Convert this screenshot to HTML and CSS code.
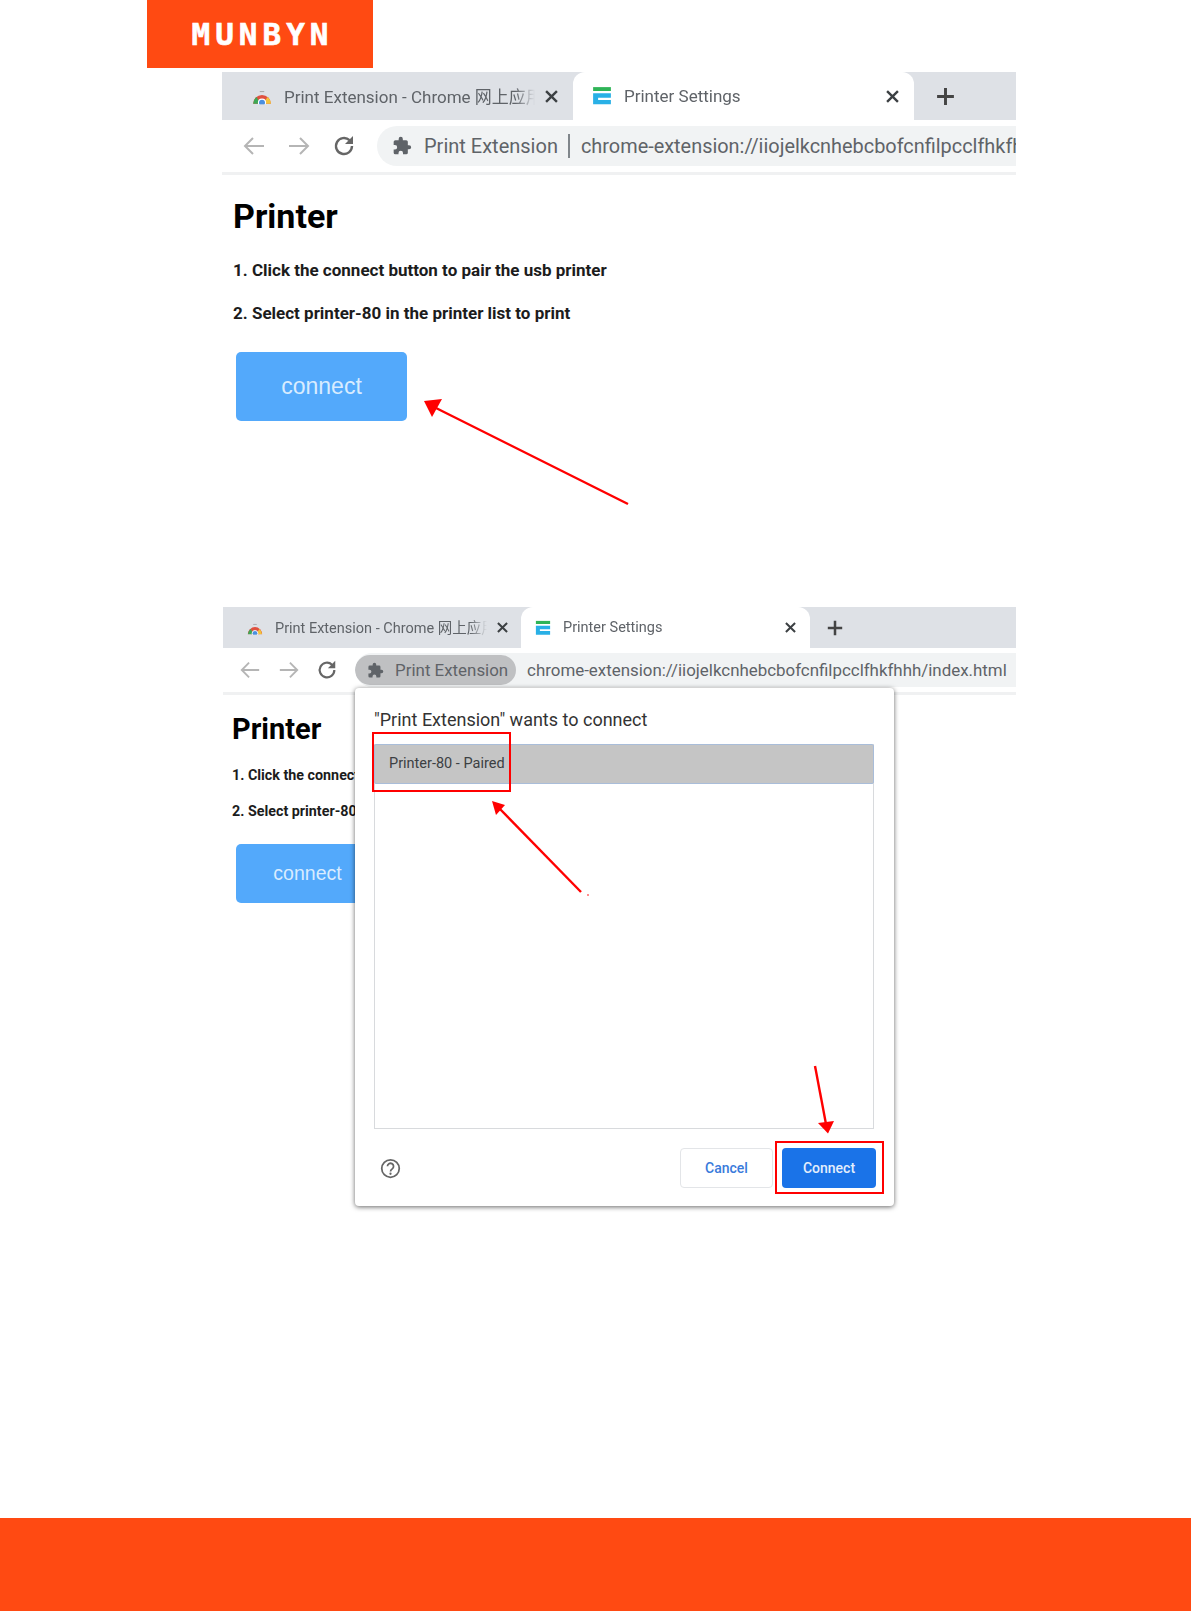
FILE: index.html
```html
<!DOCTYPE html>
<html lang="en">
<head>
  <meta charset="UTF-8" />
  <title>MUNBYN Print Extension</title>
  <link rel="stylesheet" href="styles.css">
</head>
<body>
  <header class="logo-bar"><span class="logo">MUNBYN</span></header>

  <!-- First screenshot -->
  <section class="shot shot-one">
    <div class="tabstrip">
      <div class="tab">
        <svg class="favicon" viewBox="0 0 18 18"><path d="M7 5h4" stroke="#aaa"/><path d="M1 16a8 8 0 0 1 16 0z" fill="#e0503f"/><path d="M1 16a8 8 0 0 1 3-6l4 6z" fill="#3da857"/><path d="M17 16a8 8 0 0 0-3-6l-4 6z" fill="#f3c33c"/><circle cx="9" cy="15" r="3.200" fill="#4a8fe0" stroke="#fff"/><rect y="16.500" width="18" height="2" fill="#dee1e6"/></svg>
        <span class="tab-title">Print Extension - Chrome 网上应用</span>
        <svg class="tab-close" viewBox="0 0 12 12"><path d="M1 1l10 10M11 1L1 11" stroke="#3c4043" stroke-width="2.200"/></svg>
      </div>
      <div class="tab tab-active">
        <svg class="favicon" viewBox="0 0 18 18"><rect x="1" y="1" width="16" height="3.500" fill="#2fb457"/><path d="M1 6.500h16v4H5.500v2H17v4H1z" fill="#29b0e6"/></svg>
        <span class="tab-title">Printer Settings</span>
        <svg class="tab-close" viewBox="0 0 12 12"><path d="M1 1l10 10M11 1L1 11" stroke="#3c4043" stroke-width="2.200"/></svg>
      </div>
      <svg class="new-tab" viewBox="0 0 20 20"><path d="M10 2v16M2 10h16" stroke="#444" stroke-width="2.800"/></svg>
    </div>
    <div class="toolbar">
      <svg class="nav" viewBox="0 0 24 24"><path d="M22 12H3M11 4l-8 8 8 8" fill="none" stroke="#b5b5b5" stroke-width="2"/></svg>
      <svg class="nav" viewBox="0 0 24 24"><path d="M2 12h19M13 4l8 8-8 8" fill="none" stroke="#b5b5b5" stroke-width="2"/></svg>
      <svg class="nav" viewBox="0 0 24 24"><path d="M20 12a8 8 0 1 1-2.500-5.800" fill="none" stroke="#666" stroke-width="2.400"/><path d="M21 2v8h-8z" fill="#666"/></svg>
      <div class="omnibox">
        <svg class="puzzle" viewBox="0 0 24 24"><path d="M20.500 11H19V7a2 2 0 0 0-2-2h-4V3.500a2.500 2.500 0 0 0-5 0V5H4a2 2 0 0 0-2 2v3.800h1.500a2.700 2.700 0 0 1 0 5.400H2V20a2 2 0 0 0 2 2h3.800v-1.500a2.700 2.700 0 0 1 5.400 0V22H17a2 2 0 0 0 2-2v-4h1.500a2.500 2.500 0 0 0 0-5z" fill="#5f6368"/></svg>
        <span class="ext-name">Print Extension</span>
        <span class="sep"></span>
        <span class="url">chrome-extension://iiojelkcnhebcbofcnfilpcclfhkfhhh/index.html</span>
      </div>
    </div>
    <main class="page">
      <h1>Printer</h1>
      <p>1. Click the connect button to pair the usb printer</p>
      <p>2. Select printer-80 in the printer list to print</p>
      <button class="connect">connect</button>
    </main>
    <svg class="annot" viewBox="0 0 794 520"><path d="M406 432L212 335" stroke="#f00" stroke-width="2.400"/><path d="M202 329l18-2-10 18z" fill="#f00"/></svg>
  </section>

  <!-- Second screenshot -->
  <section class="shot shot-two">
    <div class="tabstrip">
      <div class="tab">
        <svg class="favicon" viewBox="0 0 18 18"><path d="M7 5h4" stroke="#aaa"/><path d="M1 16a8 8 0 0 1 16 0z" fill="#e0503f"/><path d="M1 16a8 8 0 0 1 3-6l4 6z" fill="#3da857"/><path d="M17 16a8 8 0 0 0-3-6l-4 6z" fill="#f3c33c"/><circle cx="9" cy="15" r="3.200" fill="#4a8fe0" stroke="#fff"/><rect y="16.500" width="18" height="2" fill="#dee1e6"/></svg>
        <span class="tab-title">Print Extension - Chrome 网上应用</span>
        <svg class="tab-close" viewBox="0 0 12 12"><path d="M1 1l10 10M11 1L1 11" stroke="#3c4043" stroke-width="2.200"/></svg>
      </div>
      <div class="tab tab-active">
        <svg class="favicon" viewBox="0 0 18 18"><rect x="1" y="1" width="16" height="3.500" fill="#2fb457"/><path d="M1 6.500h16v4H5.500v2H17v4H1z" fill="#29b0e6"/></svg>
        <span class="tab-title">Printer Settings</span>
        <svg class="tab-close" viewBox="0 0 12 12"><path d="M1 1l10 10M11 1L1 11" stroke="#3c4043" stroke-width="2.200"/></svg>
      </div>
      <svg class="new-tab" viewBox="0 0 20 20"><path d="M10 2v16M2 10h16" stroke="#444" stroke-width="2.800"/></svg>
    </div>
    <div class="toolbar">
      <svg class="nav" viewBox="0 0 24 24"><path d="M22 12H3M11 4l-8 8 8 8" fill="none" stroke="#b5b5b5" stroke-width="2"/></svg>
      <svg class="nav" viewBox="0 0 24 24"><path d="M2 12h19M13 4l8 8-8 8" fill="none" stroke="#b5b5b5" stroke-width="2"/></svg>
      <svg class="nav" viewBox="0 0 24 24"><path d="M20 12a8 8 0 1 1-2.500-5.800" fill="none" stroke="#666" stroke-width="2.400"/><path d="M21 2v8h-8z" fill="#666"/></svg>
      <div class="omnibox">
        <div class="chip">
          <svg class="puzzle" viewBox="0 0 24 24"><path d="M20.500 11H19V7a2 2 0 0 0-2-2h-4V3.500a2.500 2.500 0 0 0-5 0V5H4a2 2 0 0 0-2 2v3.800h1.500a2.700 2.700 0 0 1 0 5.400H2V20a2 2 0 0 0 2 2h3.800v-1.500a2.700 2.700 0 0 1 5.400 0V22H17a2 2 0 0 0 2-2v-4h1.500a2.500 2.500 0 0 0 0-5z" fill="#5f6368"/></svg>
          <span class="ext-name">Print Extension</span>
        </div>
        <span class="url">chrome-extension://iiojelkcnhebcbofcnfilpcclfhkfhhh/index.html</span>
      </div>
    </div>
    <main class="page">
      <h1>Printer</h1>
      <p>1. Click the connect button to pair the usb printer</p>
      <p>2. Select printer-80 in the printer list to print</p>
      <button class="connect">connect</button>
    </main>

    <div class="dialog">
      <h2>"Print Extension" wants to connect</h2>
      <div class="device-list">
        <div class="device">Printer-80 - Paired</div>
      </div>
      <div class="dialog-foot">
        <svg class="help" viewBox="0 0 24 24"><circle cx="12" cy="12" r="10" fill="none" stroke="#666" stroke-width="2"/><path d="M8.500 9.500a3.500 3.500 0 1 1 5.500 2.900c-1.300.9-2 1.400-2 2.900" fill="none" stroke="#666" stroke-width="2"/><circle cx="12" cy="18" r="1.300" fill="#666"/></svg>
        <button class="btn-cancel">Cancel</button>
        <button class="btn-connect">Connect</button>
      </div>
    </div>

    <div class="mark mark-device"></div>
    <div class="mark mark-connect"></div>
    <svg class="annot" viewBox="0 0 793 640"><path d="M358 285L276 201" stroke="#f00" stroke-width="2.400"/><path d="M269 194l13 4-9 10z" fill="#f00"/><circle cx="365" cy="288" r="0.800" fill="#f00"/><path d="M592 459l11 58" stroke="#f00" stroke-width="2.400"/><path d="M605 526.500l-10-10.500 16-2z" fill="#f00"/></svg>
  </section>

  <footer class="footer-bar"></footer>
</body>
</html>
```

FILE: styles.css
```css
* {
  box-sizing: border-box;
  margin: 0;
  padding: 0;
}

html, body {
  height: 1611px;
  overflow: hidden;
}

body {
  background: #fff;
  font-family: Roboto, "Noto Sans CJK SC", sans-serif;
  display: flex;
  flex-direction: column;
}

.logo-bar {
  width: 226px;
  height: 68px;
  margin-left: 147px;
  background: #ff4a12;
  display: flex;
  align-items: center;
  justify-content: center;
}

.logo {
  color: #fff;
  font-family: "DejaVu Sans Mono", monospace;
  font-weight: bold;
  font-size: 31px;
  letter-spacing: 5px;
  margin-right: -5px;
  -webkit-text-stroke: 0.6px #fff;
}

.shot {
  position: relative;
  overflow: hidden;
}

.shot-one {
  margin: 4px 0 0 222px;
  width: 794px;
  height: 520px;
}

.shot-two {
  margin: 15px 0 0 223px;
  width: 793px;
  height: 640px;
}

.tabstrip {
  display: flex;
  align-items: stretch;
  background: #dee1e6;
  padding-left: 10px;
}

.shot-one .tabstrip { height: 48px; }
.shot-two .tabstrip { height: 41px; }

.tab {
  display: flex;
  align-items: center;
  color: #5f6368;
  white-space: nowrap;
}

.shot-one .tab { width: 341px; padding: 0 15px 0 19px; font-size: 17px; }
.shot-two .tab { width: 289px; padding: 0 14px; font-size: 14.5px; }

.shot-one .tab:first-child { padding-left: 20px; }
.shot-two .tab:first-child { width: 288px; padding-right: 13px; }

.tab:first-child .tab-title { margin-bottom: 2px; }

.tab-active {
  background: #fff;
  border-radius: 12px 12px 0 0;
}

.favicon {
  width: 20px;
  height: 20px;
  flex: none;
}

.shot-two .favicon { width: 16px; height: 16px; }

.tab-title {
  flex: 1;
  min-width: 0;
  margin-left: 12px;
  overflow: hidden;
  -webkit-mask-image: linear-gradient(90deg, #000 92%, transparent);
  mask-image: linear-gradient(90deg, #000 92%, transparent);
}

.tab-close {
  flex: none;
  margin-left: 10px;
}

.shot-one .tab-close { width: 13px; height: 13px; }
.shot-two .tab-close { width: 11px; height: 11px; }

.new-tab {
  align-self: center;
  flex: none;
}

.shot-one .new-tab { width: 21px; height: 21px; margin-left: 21px; }
.shot-two .new-tab { width: 18px; height: 18px; margin-left: 16px; }

.toolbar {
  display: flex;
  align-items: center;
  background: #fff;
  border-bottom: 3px solid #f0f1f2;
}

.shot-one .toolbar { height: 55px; padding-left: 20px; gap: 21px; }
.shot-two .toolbar { height: 47px; padding-left: 16px; gap: 16.7px; }

.nav {
  width: 24px;
  height: 24px;
  flex: none;
}

.shot-two .nav { width: 22px; height: 22px; }

.omnibox {
  flex: 1;
  min-width: 0;
  display: flex;
  align-items: center;
  background: #f1f3f4;
  border-radius: 20px 0 0 20px;
  white-space: nowrap;
  overflow: hidden;
  color: #5f6368;
}

.shot-one .omnibox { height: 40px; padding-left: 15px; font-size: 20px; }
.shot-two .omnibox { height: 34px; font-size: 16.9px; }

.shot-one .url { font-size: 19.9px; margin-left: 1px; }

.puzzle {
  width: 20px;
  height: 20px;
  flex: none;
}

.shot-two .puzzle { width: 17px; height: 17px; }

.ext-name { margin-left: 12px; }

.sep {
  width: 2px;
  height: 24px;
  margin: 0 10px;
  background: #80868b;
  flex: none;
}

.chip {
  display: flex;
  align-items: center;
  width: 161px;
  height: 30px;
  padding-left: 12px;
  margin-right: 11px;
  background: #bfc0c2;
  border-radius: 15px;
  flex: none;
}

.chip .ext-name { margin-left: 11px; }

.page { padding-left: 11px; }

.shot-one .page { padding-top: 21px; }
.shot-two .page { padding: 17px 0 0 9px; }

.page h1 {
  color: #000;
  font-weight: 700;
  line-height: 1.2;
}

.shot-one h1 { font-size: 34px; margin-bottom: 23px; }
.shot-two h1 { font-size: 29px; margin-bottom: 19px; }

.page p {
  color: #1c1c1c;
  font-weight: 700;
}

.shot-one p { font-size: 17px; line-height: 20px; margin-bottom: 23px; }
.shot-two p { font-size: 14.3px; line-height: 18px; margin-bottom: 18px; }

.connect {
  display: block;
  border: none;
  border-radius: 5px;
  background: #53a9fb;
  color: #d8ecff;
  font-family: "Liberation Sans", sans-serif;
}

.shot-one .connect { width: 171px; height: 69px; margin: 29px 0 0 3px; font-size: 23px; }
.shot-two .connect { width: 143px; height: 59px; margin: 24px 0 0 4px; font-size: 19.5px; }

.dialog {
  position: absolute;
  left: 132px;
  top: 81px;
  width: 539px;
  height: 518px;
  padding: 20px 20px 0 19px;
  background: #fff;
  border-radius: 4px;
  box-shadow: 0 1px 5px rgba(0, 0, 0, 0.6);
  display: flex;
  flex-direction: column;
}

.dialog h2 {
  color: #333;
  font-size: 18px;
  font-weight: 400;
  line-height: 24px;
  margin-bottom: 12px;
}

.device-list {
  flex: 1;
  border: 1px solid #d8dadd;
  border-top: none;
}

.device {
  height: 40px;
  padding-left: 14px;
  background: #c5c5c5;
  border: 1px solid #a9bdd9;
  border-radius: 2px;
  margin: 0 -1px;
  color: #3c4043;
  font-size: 14.5px;
  line-height: 38px;
}

.dialog-foot {
  display: flex;
  align-items: center;
  height: 77px;
  padding-top: 1px;
  margin-right: -2px;
}

.help {
  width: 21px;
  height: 21px;
  margin: 0 auto 0 6px;
}

.btn-cancel, .btn-connect {
  height: 40px;
  border-radius: 4px;
  font-family: Roboto, sans-serif;
  font-size: 14px;
  font-weight: 500;
}

.btn-cancel {
  width: 93px;
  background: #fff;
  border: 1px solid #e3e5e8;
  color: #3a7bdb;
  margin-right: 9px;
}

.btn-connect {
  width: 94px;
  background: #1a73e8;
  border: none;
  color: #e3eefc;
}

.mark {
  position: absolute;
  border: 2px solid #f00;
}

.mark-device { left: 149px; top: 125px; width: 139px; height: 60px; }
.mark-connect { left: 552px; top: 534px; width: 109px; height: 53px; }

.annot {
  position: absolute;
  left: 0;
  top: 0;
  width: 100%;
  height: 100%;
  pointer-events: none;
}

.footer-bar {
  margin-top: auto;
  height: 93px;
  background: #ff4a12;
  flex: none;
}
```
